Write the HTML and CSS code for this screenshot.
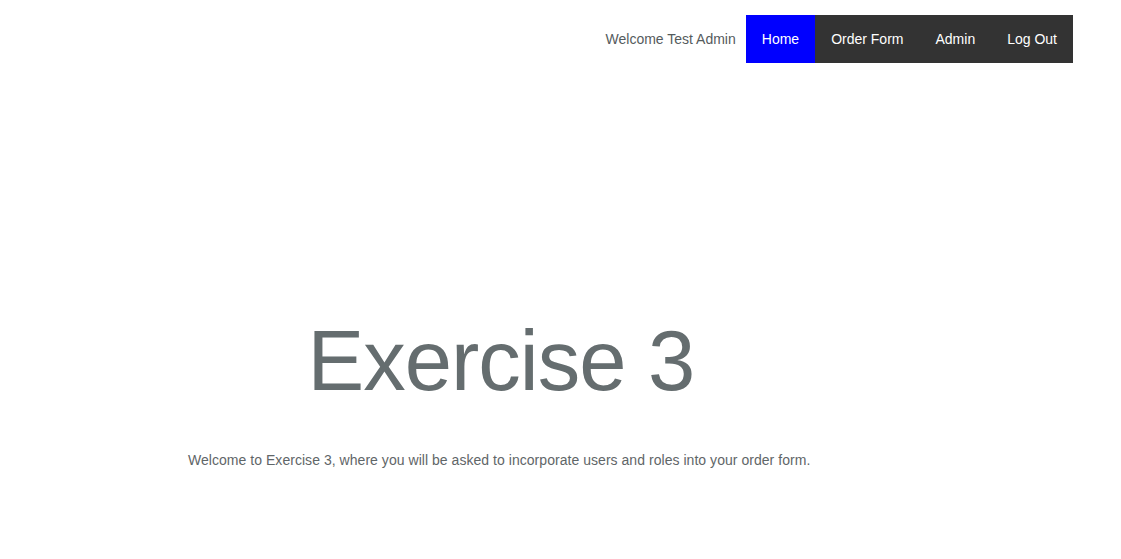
FILE: index.html
```html
<!DOCTYPE html>
<html>
<head>
<meta charset="utf-8">
<link rel="stylesheet" href="styles.css">
</head>
<body>
<header class="topbar">
  <span class="welcome">Welcome Test Admin</span>
  <nav class="nav">
    <a class="nav-item active" href="#">Home</a>
    <a class="nav-item" href="#">Order Form</a>
    <a class="nav-item" href="#">Admin</a>
    <a class="nav-item" href="#">Log Out</a>
  </nav>
</header>
<main class="content">
  <h1 class="title">Exercise 3</h1>
  <p class="intro">Welcome to Exercise 3, where you will be asked to incorporate users and roles into your order form.</p>
</main>
</body>
</html>
```
FILE: styles.css
```css
html, body {
  margin: 0;
  padding: 0;
  background: #fff;
}
body {
  font-family: "Liberation Sans", Arial, Helvetica, sans-serif;
  color: #5f6668;
}
.topbar {
  display: flex;
  justify-content: flex-end;
  align-items: center;
  padding: 15px 48px 0 0;
}
.welcome {
  font-size: 14px;
  color: #555b5d;
  margin-right: 10px;
}
.nav {
  display: flex;
  background: #333;
  height: 48px;
}
.nav-item {
  display: flex;
  align-items: center;
  padding: 0 16px;
  font-size: 14px;
  color: #fff;
  text-decoration: none;
}
.nav-item.active {
  background: #0000ff;
}
.content {
  width: 630px;
  margin-left: 188px;
}
.title {
  margin: 255px 0 0;
  padding-right: 4px;
  font-size: 85px;
  font-weight: 300;
  line-height: 85px;
  letter-spacing: -1px;
  text-align: center;
  color: #656d6f;
}
.intro {
  margin: 47px 0 0;
  font-size: 14px;
  line-height: 20px;
  letter-spacing: 0.04px;
  white-space: nowrap;
  color: #5f6668;
}
```
